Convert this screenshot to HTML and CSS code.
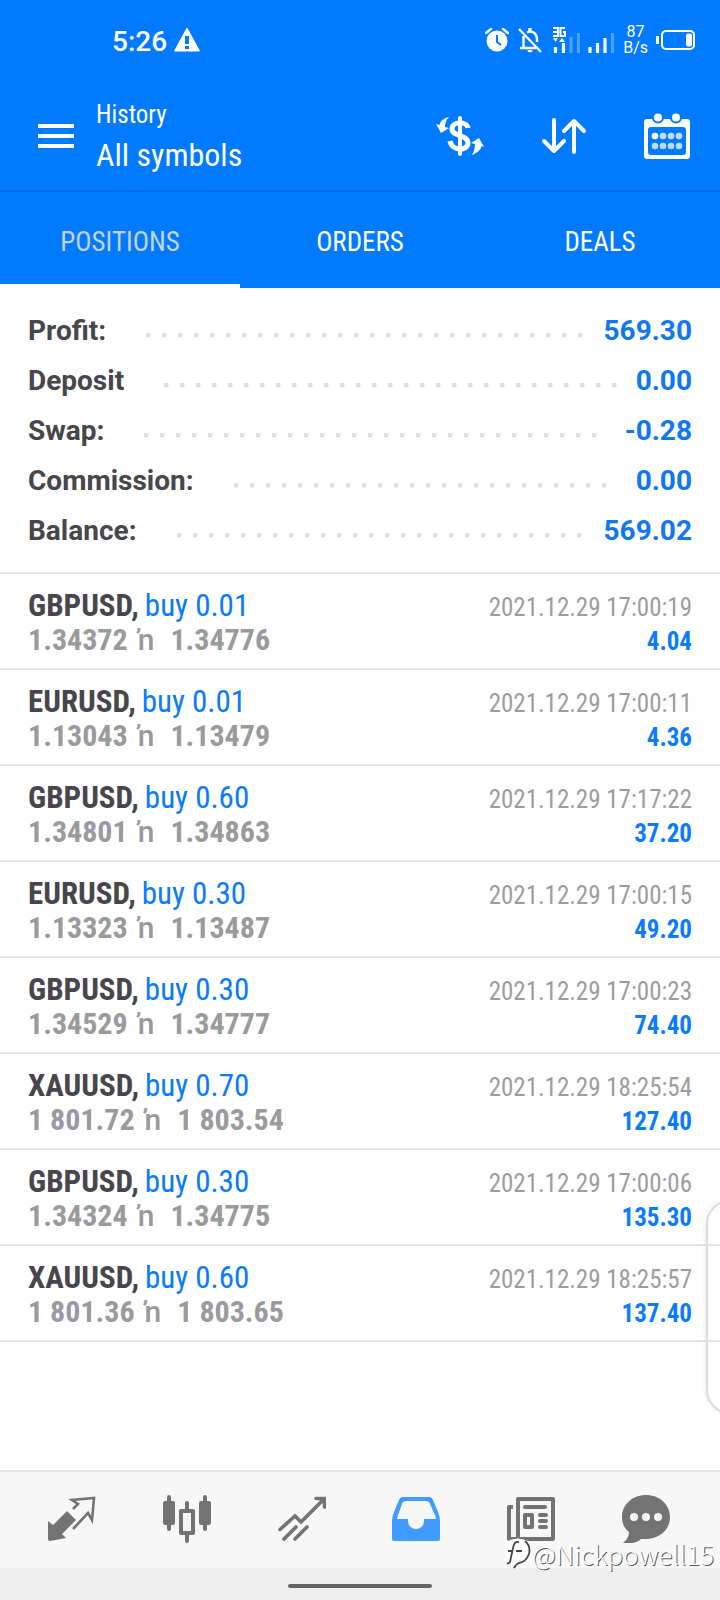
FILE: index.html
```html
<!DOCTYPE html>
<html lang="en">
<head>
<meta charset="utf-8">
<meta name="viewport" content="width=device-width, initial-scale=1">
<title>History</title>
<link rel="stylesheet" href="styles.css">
</head>
<body>
<div class="screen">
  <div class="status">
    <div class="status-left">
      <span class="clock">5:26</span>
      <svg class="warn" width="28" height="26" viewBox="0 0 28 26"><path d="M14 1 26.500 24H1.500Z" fill="#fff" stroke="#fff" stroke-linejoin="round"/><path d="M14 9v8M14 19v3" stroke="#007aff" stroke-width="4"/></svg>
    </div>
    <div class="status-right">
      <svg width="24" height="26" viewBox="0 0 24 26"><circle cx="12" cy="14" r="10.500" fill="#fff"/><path d="M1 6 6 2M23 6 18 2" stroke="#fff" stroke-width="2.500" stroke-linecap="round"/><path d="M12 8v7l4 3" fill="none" stroke="#007aff" stroke-width="2"/></svg>
      <svg width="26" height="26" viewBox="0 0 26 26" fill="none" stroke="#fff" stroke-width="2.400"><path d="M2 2 24 25"/><path d="M6.500 9v11M3 21h16M10 5.500C15 3 20 6.500 20 12v3"/><path d="M13 1v4" stroke-width="3.500"/><path d="M10.500 23h5a2.500 2.500 0 0 1-5 0Z" fill="#fff" stroke="none"/></svg>
      <svg width="29" height="28" viewBox="-1 0 29 28"><path d="M1 2h5v8H1M1 6h5M13 2H8.500v8H13V6h-2" fill="none" stroke="#fff" stroke-width="2"/><path d="M1 12h5l-2.500 4ZM7 16h6l-3-4Z" fill="#fff"/><path d="M3.500 21v6M11.500 17v10" stroke="#fff" stroke-width="3.200"/><path d="M19 11v16M26.500 7v20" stroke="#4da2ff" stroke-width="3.200"/></svg>
      <svg width="27" height="28" viewBox="0 0 27 28"><path d="M2 21v6M9.500 17v10M17 12v15" stroke="#fff" stroke-width="3.200"/><path d="M24.500 7v20" stroke="#4da2ff" stroke-width="3.200"/></svg>
      <span class="speed"><span>87</span><span>B/s</span></span>
      <svg class="battery" width="40" height="20" viewBox="0 0 40 20"><path d="M1.500 6v8" stroke="#fff" stroke-width="3"/><rect x="6" y="1" width="32" height="18" rx="4" fill="none" stroke="#fff" stroke-width="2"/><rect x="30" y="3.500" width="6" height="13" rx="2" fill="#fff"/></svg>
    </div>
  </div>

  <header class="appbar">
    <button class="icon-btn" type="button" aria-label="Menu">
      <svg width="36" height="24" viewBox="0 0 36 24"><path d="M0 2h36M0 12h36M0 22h36" stroke="#fff" stroke-width="4"/></svg>
    </button>
    <div class="titles">
      <div class="subtitle">History</div>
      <h1 class="title">All symbols</h1>
    </div>
    <div class="actions">
      <button class="icon-btn" type="button" aria-label="Currency">
        <svg width="48" height="42" viewBox="0 0 48 42" fill="none" stroke="#fff"><path d="M24 3v36" stroke-width="4" stroke-linecap="round"/><path d="M32 13C31 6 16 6 16 14c0 8 16 5 16 14 0 8-16 9-18-2" stroke-width="5"/><path d="M13 2C8 3 4 6 3.500 10L0 9l5 9 8-5-4-1c0-4 1-7 4-10ZM36 40c5-2 9-5 9.500-9l2.500 1-5-9-8 5 4 1c0 4-1 7-3 11Z" fill="#fff" stroke="none"/></svg>
      </button>
      <button class="icon-btn" type="button" aria-label="Sort">
        <svg width="44" height="38" viewBox="0 0 44 38" fill="none" stroke="#fff" stroke-width="4" stroke-linecap="round" stroke-linejoin="round"><path d="M12 3v31M2 24l10 10 10-10M32 35V4M22 14 32 4l10 10"/></svg>
      </button>
      <button class="icon-btn" type="button" aria-label="Calendar">
        <svg width="46" height="46" viewBox="0 0 46 46"><path fill="#fff" fill-rule="evenodd" d="M3 6h40a3 3 0 0 1 3 3v34a3 3 0 0 1-3 3H3a3 3 0 0 1-3-3V9a3 3 0 0 1 3-3ZM7 14a3 3 0 0 0-3 3v22a3 3 0 0 0 3 3h32a3 3 0 0 0 3-3V17a3 3 0 0 0-3-3Z"/><g fill="#fff" stroke="#007aff" stroke-width="2"><circle cx="14" cy="4.500" r="5"/><circle cx="32" cy="4.500" r="5"/></g><circle cx="11" cy="23" r="3.300" fill="#fff"/><g fill="#bfdeff"><circle cx="19" cy="23" r="3.300"/><circle cx="27" cy="23" r="3.300"/><circle cx="35" cy="23" r="3.300"/><circle cx="11" cy="33" r="3.300"/><circle cx="19" cy="33" r="3.300"/><circle cx="27" cy="33" r="3.300"/><circle cx="35" cy="33" r="3.300"/></g></svg>
      </button>
    </div>
  </header>

  <div class="tabs" role="tablist">
    <button class="tab tab-active" type="button" role="tab" aria-selected="true">POSITIONS</button>
    <button class="tab" type="button" role="tab" aria-selected="false">ORDERS</button>
    <button class="tab" type="button" role="tab" aria-selected="false">DEALS</button>
  </div>

  <main class="content">
    <dl class="summary">
      <div class="sum-row"><dt>Profit:</dt><dd>569.30</dd></div>
      <div class="sum-row"><dt>Deposit</dt><dd>0.00</dd></div>
      <div class="sum-row"><dt>Swap:</dt><dd>-0.28</dd></div>
      <div class="sum-row"><dt>Commission:</dt><dd>0.00</dd></div>
      <div class="sum-row"><dt>Balance:</dt><dd>569.02</dd></div>
    </dl>
    <ul class="deals">
      <li class="deal"><div class="line"><span class="name"><b class="symbol">GBPUSD,</b><span class="side">buy 0.01</span></span><time class="time">2021.12.29 17:00:19</time></div><div class="line"><span class="price">1.34372<span class="to">ŉ</span>1.34776</span><span class="profit">4.04</span></div></li>
      <li class="deal"><div class="line"><span class="name"><b class="symbol">EURUSD,</b><span class="side">buy 0.01</span></span><time class="time">2021.12.29 17:00:11</time></div><div class="line"><span class="price">1.13043<span class="to">ŉ</span>1.13479</span><span class="profit">4.36</span></div></li>
      <li class="deal"><div class="line"><span class="name"><b class="symbol">GBPUSD,</b><span class="side">buy 0.60</span></span><time class="time">2021.12.29 17:17:22</time></div><div class="line"><span class="price">1.34801<span class="to">ŉ</span>1.34863</span><span class="profit">37.20</span></div></li>
      <li class="deal"><div class="line"><span class="name"><b class="symbol">EURUSD,</b><span class="side">buy 0.30</span></span><time class="time">2021.12.29 17:00:15</time></div><div class="line"><span class="price">1.13323<span class="to">ŉ</span>1.13487</span><span class="profit">49.20</span></div></li>
      <li class="deal"><div class="line"><span class="name"><b class="symbol">GBPUSD,</b><span class="side">buy 0.30</span></span><time class="time">2021.12.29 17:00:23</time></div><div class="line"><span class="price">1.34529<span class="to">ŉ</span>1.34777</span><span class="profit">74.40</span></div></li>
      <li class="deal"><div class="line"><span class="name"><b class="symbol">XAUUSD,</b><span class="side">buy 0.70</span></span><time class="time">2021.12.29 18:25:54</time></div><div class="line"><span class="price">1 801.72<span class="to">ŉ</span>1 803.54</span><span class="profit">127.40</span></div></li>
      <li class="deal"><div class="line"><span class="name"><b class="symbol">GBPUSD,</b><span class="side">buy 0.30</span></span><time class="time">2021.12.29 17:00:06</time></div><div class="line"><span class="price">1.34324<span class="to">ŉ</span>1.34775</span><span class="profit">135.30</span></div></li>
      <li class="deal"><div class="line"><span class="name"><b class="symbol">XAUUSD,</b><span class="side">buy 0.60</span></span><time class="time">2021.12.29 18:25:57</time></div><div class="line"><span class="price">1 801.36<span class="to">ŉ</span>1 803.65</span><span class="profit">137.40</span></div></li>
    </ul>
    <div class="edge-panel"></div>
  </main>

  <nav class="bottom-nav">
    <button class="nav-btn" type="button" aria-label="Quotes">
      <svg width="48" height="48" viewBox="0 0 48 48"><path d="M0 26 5 30 19 16l9 9-14 14 4 4-16 3q-2 0-2-2Z" fill="#737373"/><path d="M25 14l5-5-6-4 22-2-2 22-4-7-15 16" fill="none" stroke="#737373" stroke-width="2.600"/></svg>
    </button>
    <button class="nav-btn" type="button" aria-label="Charts">
      <svg width="48" height="48" viewBox="0 0 48 48" stroke="#737373" fill="none"><path d="M6 2v32M42 2v32M24 8v8M24 40v6" stroke-width="4" stroke-linecap="round"/><rect x="0" y="6" width="12" height="24" rx="2" fill="#737373" stroke="none"/><rect x="36" y="6" width="12" height="24" rx="2" fill="#737373" stroke="none"/><rect x="18" y="16" width="12" height="22" stroke-width="4" stroke-linejoin="round"/></svg>
    </button>
    <button class="nav-btn" type="button" aria-label="Trade">
      <svg width="48" height="48" viewBox="0 0 48 48" stroke="#737373" fill="none" stroke-width="3.600" stroke-linecap="round"><path d="M2 34.500 17 21l6 6L46 4M38 3.500h8.500V12M6 44l12-12M17 44l12-12"/></svg>
    </button>
    <button class="nav-btn" type="button" aria-label="History">
      <svg width="48" height="48" viewBox="0 0 48 48"><path d="M11 2h26q3 0 4 3l5 12q2 4 2 9v18q0 2-2 2H2q-2 0-2-2V26q0-5 2-9L7 5q1-3 4-3Z" fill="#409cff"/><path d="M14 6h20q3 0 4 3l5 11 1 4H32v2a8 8 0 0 1-16 0v-2H5l1-4L10 9q1-3 4-3Z" fill="#f7f7f7"/></svg>
    </button>
    <button class="nav-btn" type="button" aria-label="News">
      <svg width="48" height="48" viewBox="0 0 48 48" stroke="#737373" fill="none" stroke-width="4" stroke-linejoin="round"><path d="M11 4h35v40H11ZM6 12H2v32h9"/><path d="M18 12h20M33 20h6M33 26h6M33 32h6" stroke-linecap="round"/><rect x="18" y="20" width="7" height="12"/></svg>
    </button>
    <button class="nav-btn" type="button" aria-label="Chat">
      <svg width="48" height="48" viewBox="0 0 48 48"><path d="M24 0c13 0 24 9 24 22 0 14-12 22-24 22h-5c-4 4-11 5-18 4 4-3 6-7 6-11C3 34 0 29 0 22 0 9 11 0 24 0Z" fill="#737373"/><g fill="#f7f7f7"><circle cx="12" cy="22" r="4"/><circle cx="24" cy="22" r="4"/><circle cx="36" cy="22" r="4"/></g></svg>
    </button>
  </nav>
  <div class="gesture"><span class="pill"></span></div>
  <div class="watermark">
    <svg width="28" height="32" viewBox="0 0 28 32" fill="none"><path d="M1 5Q12-3 24 3q5 6 3 15-4 8-12 11Q5 29 1 22Z" fill="#fff"/><path d="M15 4q-5-1-6 6L6 24q-1 2-3 1M4 13h4M12 13h6" stroke="#444" stroke-width="1.800"/><path d="M21 3q6 5 4 13-3 8-10 9-3 1-5 5" stroke="#444" stroke-width="1.800"/></svg>
    <span>@Nickpowell15</span>
  </div>
</div>
</body>
</html>
```
FILE: styles.css
```css
* {
  box-sizing: border-box;
}

body {
  margin: 0;
  font-family: "Roboto Condensed", "Roboto", "Liberation Sans Narrow", sans-serif;
  color: #46464b;
  background: #fff;
}

button {
  padding: 0;
  border: 0;
  background: none;
  font: inherit;
}

svg {
  display: block;
}

.screen {
  position: relative;
  display: flex;
  flex-direction: column;
  min-height: 100vh;
  overflow: hidden;
}

.status {
  display: flex;
  justify-content: space-between;
  align-items: center;
  height: 80px;
  padding: 0 24px 0 112px;
  color: #fff;
  background: #007aff;
  font-family: "Roboto", sans-serif;
}

.status-left,
.status-right {
  display: flex;
  align-items: center;
}

.status-left {
  gap: 6px;
}

.status-right {
  gap: 8px;
}

.clock {
  padding-top: 4px;
  font-size: 28px;
  font-weight: 500;
  line-height: 32px;
}

.speed {
  display: flex;
  flex-direction: column;
  align-items: center;
  font-size: 16px;
  font-weight: 400;
  line-height: 16px;
}

.appbar {
  display: flex;
  align-items: center;
  height: 112px;
  padding: 2px 30px 0 38px;
  border-bottom: 2px solid #006ee6;
  color: #fff;
  background: #007aff;
}

.titles {
  margin-left: 22px;
  padding-top: 2px;
}

.subtitle {
  font-size: 25px;
  line-height: 36px;
}

.title {
  margin: 0;
  font-size: 32px;
  font-weight: 400;
  line-height: 44px;
}

.actions {
  display: flex;
  align-items: center;
  gap: 58px;
  margin-left: auto;
}

.tabs {
  display: grid;
  grid-template-columns: repeat(3, 1fr);
  background: #007aff;
}

.tab {
  height: 96px;
  padding-top: 4px;
  border-top: 4px solid transparent;
  border-bottom: 4px solid transparent;
  color: #fff;
  font-size: 27px;
}

.tab-active {
  border-bottom-color: #fff;
  color: #c4d3e8;
}

.content {
  position: relative;
  flex: 1;
}

.summary {
  margin: 0;
  padding: 18px 28px 16px;
  border-bottom: 2px solid #e2e2e2;
  font-family: "Roboto", sans-serif;
  font-size: 28px;
  font-weight: 700;
  line-height: 50px;
}

.sum-row {
  display: flex;
}

.sum-row dd {
  display: flex;
  flex: 1;
  margin: 0 0 0 40px;
  color: #0f78f0;
}

.sum-row dd::before {
  content: "";
  flex: 1;
  height: 5px;
  margin: 27px 19px 0 0;
  background: radial-gradient(circle at 2px 2px, #dedede 2px, transparent 3px) 0 0 / 16px 5px repeat-x;
}

.deals {
  margin: 0;
  padding: 0;
  list-style: none;
}

.deal {
  padding: 15px 28px 11px;
  border-bottom: 2px solid #e2e2e2;
  font-size: 31px;
  line-height: 34px;
}

.line {
  display: flex;
  justify-content: space-between;
  align-items: baseline;
}

.name {
  display: flex;
  gap: 6px;
}

.symbol {
  font-weight: 700;
}

.side {
  color: #0a7aff;
}

.price {
  display: flex;
  color: #9a9a9e;
  font-size: 30px;
  font-weight: 700;
}

.to {
  margin: 0 16px 0 10px;
  font-family: "Roboto", sans-serif;
  font-weight: 500;
}

.time,
.profit {
  font-size: 25px;
  line-height: 30px;
}

.time {
  color: #9c9ca0;
}

.profit {
  color: #0a7aff;
  font-weight: 700;
}

.edge-panel {
  position: absolute;
  right: -34px;
  bottom: 56px;
  width: 48px;
  height: 214px;
  border: 2px solid #dcdcdc;
  border-radius: 24px;
  box-shadow: 0 0 4px #e4e4e4;
}

.bottom-nav {
  display: grid;
  grid-template-columns: repeat(6, 48px);
  justify-content: space-between;
  align-items: center;
  height: 98px;
  padding: 0 50px 2px 48px;
  border-top: 2px solid #e2e2e2;
  background: #f7f7f7;
}

.gesture {
  display: flex;
  justify-content: center;
  height: 32px;
  padding-top: 16px;
  background: #eee;
}

.pill {
  width: 144px;
  height: 4px;
  border-radius: 2px;
  background: #646464;
}

.watermark {
  position: absolute;
  right: 6px;
  bottom: 30px;
  display: flex;
  align-items: center;
  color: #fff;
  font-family: "Noto Sans CJK SC", "Noto Sans", sans-serif;
  font-size: 26px;
  font-weight: 300;
  line-height: 32px;
  text-shadow: 1px 1px 0 #555;
}
```
